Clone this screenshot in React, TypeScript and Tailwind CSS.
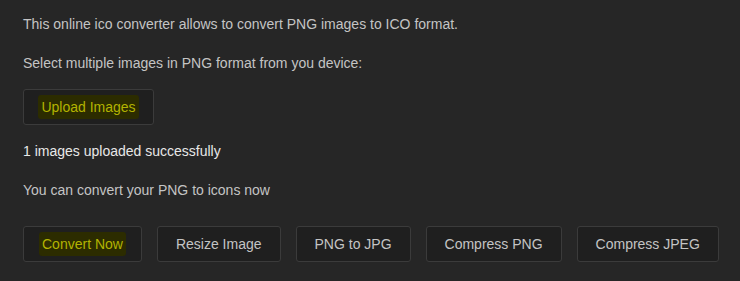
import React from "react";

const tools = ["Convert Now", "Resize Image", "PNG to JPG", "Compress PNG", "Compress JPEG"];

const Highlight: React.FC<{ children: React.ReactNode }> = ({ children }) => (
  <span className="-mx-[3px] rounded-[3px] bg-[#2c2c00] px-[3px] py-[2px] text-[#b3b300]">{children}</span>
);

const App: React.FC = () => {
  return (
    <div
      className="h-[281px] w-[740px] bg-[#262626] px-[23px] pt-[14px] text-[14px] leading-5 text-[#c4c4c4]"
      style={{ fontFamily: '"Liberation Sans", Arial, sans-serif' }}
    >
      <p>This online ico converter allows to convert PNG images to ICO format.</p>
      <p className="mt-[19px]">Select multiple images in PNG format from you device:</p>

      <button className="mt-[16px] flex h-[36px] w-[131px] items-center justify-center rounded-[3px] border border-[#3b3b3b] bg-[#1f1f1f]">
        <Highlight>Upload Images</Highlight>
      </button>

      <p className="mt-[16px] text-[#e8e8e8]">1 images uploaded successfully</p>
      <p className="mt-[19px]">You can convert your PNG to icons now</p>

      {/* tool buttons */}
      <div className="mt-[26px] flex gap-[15px]">
        {tools.map((t, i) => (
          <button
            key={t}
            className="flex h-[36px] shrink-0 items-center justify-center whitespace-nowrap rounded-[3px] border border-[#3b3b3b] bg-[#1f1f1f] px-[18px] text-[#c4c4c4]"
          >
            {i === 0 ? <Highlight>{t}</Highlight> : t}
          </button>
        ))}
      </div>
    </div>
  );
};

export default App;
